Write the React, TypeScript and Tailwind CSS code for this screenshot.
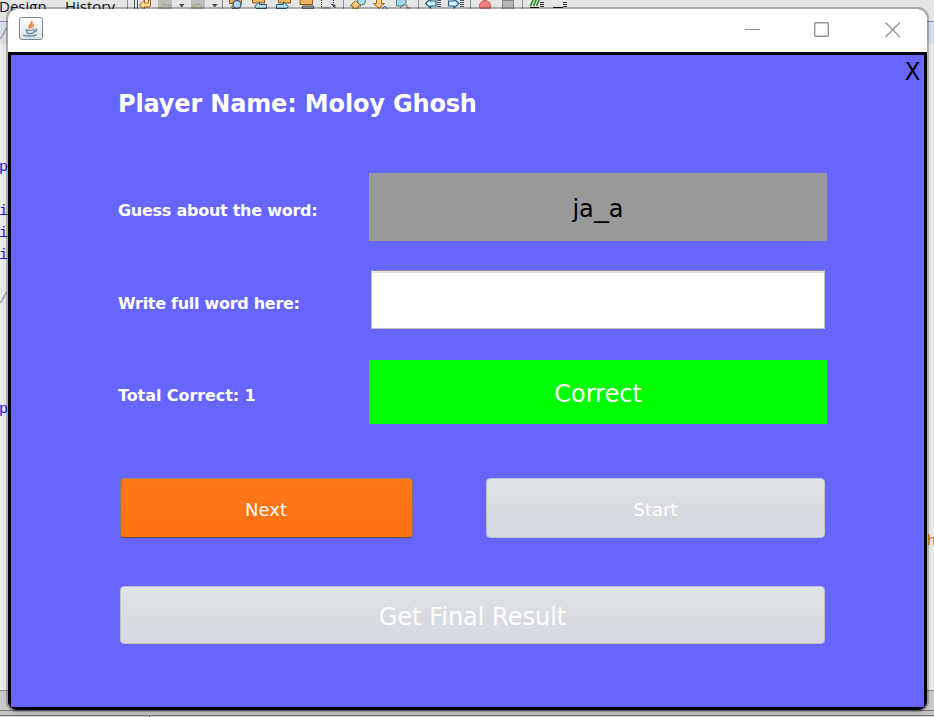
import React from "react";

const CODE_MARKS = [
  { text: "/", top: "top-[26px]", color: "text-[#969696]" },
  { text: "p", top: "top-[158px]", color: "text-[#1818d8]" },
  { text: "i", top: "top-[202px]", color: "text-[#1818d8]" },
  { text: "i", top: "top-[224px]", color: "text-[#1818d8]" },
  { text: "i", top: "top-[246px]", color: "text-[#1818d8]" },
  { text: "/", top: "top-[290px]", color: "text-[#969696]" },
  { text: "p", top: "top-[400px]", color: "text-[#1818d8]" },
];

function ToolbarIcons() {
  return (
    <svg className="absolute left-0 top-0" width="600" height="12" viewBox="0 0 600 12">
      <g stroke="#8c8c8c" strokeWidth="1">
        <path d="M127.500 0V9M222.500 0V9M343.500 0V9M418.500 0V9M470.500 0V9M522.500 0V9" />
      </g>
      <path d="M134.500 0V9M137.500 0V9" stroke="#41566f" />
      <path d="M139.500 5l5-5v3h4v-3h2v6l-1 1h-5v3z" fill="#ffdc94" stroke="#aa6412" />
      <path d="M158 0h14v9h-14zM191 0h14v9h-14z" fill="#bcbcbc" />
      <path d="M161 7l4-4v2h5v4h-5v2zM202 7l-4-4v2h-5v4h5v2z" fill="#c8b9a5" stroke="#a5a09a" />
      <path d="M179 4h5.500l-2.750 3.500zM212 4h5.500l-2.750 3.500z" fill="#435369" />
      <path d="M229.500 -1h12v4.500h-12z" fill="#e9a64b" stroke="#8d5a1c" />
      <circle cx="237" cy="4.500" r="4" fill="#b8daf0" stroke="#46688a" strokeWidth="1.500" />
      <path d="M232 5.500v3h3" fill="none" stroke="#8d5a1c" />
      <path d="M252.500 -1h12v4h-12zM278.500 -1h12v4h-12zM300 -1h12.500v5.500h-12.500z" fill="#efb15a" stroke="#8d5a1c" />
      <path d="M254.500 6.500l5-4.500v2.500h7v4h-10zM288.500 6.500l-5-4.500v2.500h-7v4h10z" fill="#b8e2f7" stroke="#235e8c" />
      <path d="M302.500 6h11v3h-11z" fill="#aaa" stroke="#555" />
      <path d="M321.500 0v8h10M333.500 0v4" fill="none" stroke="#222" strokeDasharray="1 1" />
      <path d="M331 4l4 4v-3z" fill="#526174" stroke="#526174" />
      <circle cx="361.500" cy="1" r="4" fill="#a9dce5" stroke="#44849a" />
      <path d="M350 6l5.500-5.500 5.500 5.500h-3v3h-5v-3z" fill="#ffd083" stroke="#a36516" />
      <path d="M373.500 3.500h3v-4h5v4h3l-5.500 5z" fill="#ffd083" stroke="#a36516" />
      <path d="M382 9l3-3 3 3" fill="#a9dce5" stroke="#44849a" />
      <path d="M396.500 -1h8.500l1.500 3-3.500 4h-6.500z" fill="#9ed9e5" stroke="#47849a" />
      <path d="M400 8l3-3h4v3h3" fill="none" stroke="#777" />
      <path d="M425.500 3.500l5-4.500v2h5.500v5h-5.500v2zM459 3.500l-5-4.500v2h-5.500v5h5.500v2z" fill="#d8f3ff" stroke="#17618f" strokeWidth="1.200" />
      <path d="M437 0.500h4M437 2.500h4M437 4.500h4M437 6.500h4M460 0.500h4M460 2.500h4M460 4.500h4M460 6.500h4" stroke="#4b5660" />
      <circle cx="485" cy="6" r="5.500" fill="#f1807d" stroke="#bd5e5e" />
      <path d="M502.500 0.500h11v9h-11z" fill="#b9b9b9" stroke="#838383" />
      <path d="M530.500 6l3-7M533.500 6l3-7M536.500 6l3-7" stroke="#208a16" strokeWidth="1.500" />
      <path d="M530 7.500h9M553 7.500h10" stroke="#111" />
      <path d="M540 2.500h4M540 4.500h4M540 6.500h4M563 2.500h4M563 4.500h4M563 6.500h4" stroke="#333" />
    </svg>
  );
}

function EditorBackdrop() {
  return (
    <div className="flex h-full flex-col bg-[#ececec]">
      <div className="relative h-[21px] bg-[#e6e6e6] font-['Open_Sans','Noto_Sans',sans-serif] text-[15px] leading-[20px] text-[#111]">
        <span className="absolute -left-px -top-[4px]">Design</span>
        <span className="absolute left-[65px] -top-[4px]">History</span>
        <ToolbarIcons />
      </div>
      <div className="h-[23px] border-t border-[#7e9bbd] bg-[#dbe2eb]" />
      <div className="flex-1" />
      <div className="h-[20px] border-t border-[#8b8b91] bg-[#cbcbcb]" />
      <div className="h-[5px] border-t border-[#77777c] bg-[#c5c5c5]" />
      <div className="flex h-[2px] border-t border-[#77777c] bg-[#d0d0d0]">
        <div className="w-[150px] border-r border-[#77777c]" />
      </div>
      <div className="font-['Liberation_Mono',monospace] text-[15px] leading-[20px]">
        {CODE_MARKS.map((mark) => (
          <span key={mark.top} className={`absolute -left-px ${mark.top} ${mark.color}`}>
            {mark.text}
          </span>
        ))}
        <span className="absolute left-[927px] top-[532px] text-[#ce7b00]">h</span>
      </div>
    </div>
  );
}

function JavaIcon() {
  return (
    <svg width="24" height="23" viewBox="0 0 24 23" fill="none">
      <defs>
        <linearGradient id="tile" x1="0" y1="0" x2="0" y2="1">
          <stop stopColor="#fff" />
          <stop offset="1" stopColor="#dcdee0" />
        </linearGradient>
      </defs>
      <rect x="0.500" y="0.500" width="23" height="22" rx="2" fill="url(#tile)" stroke="#718798" />
      <path d="M11 11.500c-4-3 3-4 1.500-7.500 2.500 3-3 4-1.500 7.500M13 11c-2-2 1-2.500 1.500-4-1 2 1 2-1.500 4" stroke="#ed8b40" strokeWidth="1.300" />
      <path d="M6.500 12.500c2 1 6 1 9 0M7.500 13c0 4 1.500 3.500 4 3.500s4-.5 4-3.500M16 12c2.500-.5 2.500 2.500-1 3M4.500 17.500c-1 2 11 2 13 0" stroke="#668ba5" strokeWidth="1.300" />
    </svg>
  );
}

function TitleBar() {
  return (
    <header className="flex h-[43px] items-start justify-between bg-white pl-[11px] pr-[26px]">
      <div className="pt-[8px]"><JavaIcon /></div>
      <svg className="mt-[12px]" width="156" height="17" viewBox="0 0 156 17" fill="none" stroke="#929292">
        <path d="M0 8.500h15" />
        <rect x="69.700" y="1.700" width="13.600" height="13.600" rx="1" strokeWidth="1.400" />
        <path d="M140.500 1.500l14.500 14.500M155 1.500L140.500 16" strokeWidth="1.200" />
      </svg>
    </header>
  );
}

function GreyButton({ className, children }: { className: string; children: React.ReactNode }) {
  return (
    <button className={`flex items-center justify-center rounded-[4px] border border-[#bfc2c5] bg-linear-to-b from-[#e1e4e8] from-0% via-[#d7dbdf] via-60% to-[#d7dae2] to-70% text-white ${className}`}>
      {children}
    </button>
  );
}

function GameForm() {
  return (
    <main className="relative h-[658px] border-[3px] border-black bg-[#6666ff] pl-[107px] pt-[33px] font-['DejaVu_Sans',sans-serif] text-white">
      <button className="absolute right-[4px] top-[3px] origin-right scale-x-[0.95] text-[24px] leading-[28px] text-black">X</button>
      <h1 className="h-[85px] whitespace-nowrap text-[24px] leading-[32px] font-bold tracking-[-0.16px]">Player Name: Moloy Ghosh</h1>
      <div className="flex h-[68px] w-[709px] items-center justify-between">
        <label className="pt-[8px] text-[16px] font-bold tracking-[-0.26px]">Guess about the word:</label>
        <div className="flex h-[68px] w-[458px] items-center justify-center bg-[#999999] pt-[3px] text-[24px] text-black">
          <span>ja</span>
          <span className="inline-block w-[15px] origin-left scale-x-[1.25]">_</span>
          <span>a</span>
        </div>
      </div>
      <div className="mt-[29px] flex h-[59px] w-[707px] items-center justify-between">
        <label className="pt-[8px] text-[16px] font-bold tracking-[-0.29px]">Write full word here:</label>
        <input aria-label="Full word" className="h-[59px] w-[454px] border border-[#bcbcbc] border-t-[#8b8b8b] bg-white shadow-[inset_0_2px_0_#e0e0e0] outline-none" />
      </div>
      <div className="mt-[31px] flex h-[64px] w-[709px] items-center justify-between">
        <label className="pt-[8px] text-[16px] font-bold tracking-[-0.08px]">Total Correct: 1</label>
        <div className="flex h-[64px] w-[458px] items-center justify-center bg-[#00ff00] pt-[3px] text-[24px]">Correct</div>
      </div>
      <div className="ml-[2px] mt-[54px] flex w-[705px] justify-between">
        <button className="flex h-[60px] w-[293px] items-center justify-center rounded-[4px] border border-[#84776b] border-t-[#a08872] border-b-[#66513f] bg-linear-to-b from-[#ff771c] to-[#ff7112] pt-[2px] pr-[1px] text-[18px]">Next</button>
        <GreyButton className="h-[60px] w-[339px] pt-[2px] text-[18px]">Start</GreyButton>
      </div>
      <GreyButton className="ml-[2px] mt-[48px] h-[58px] w-[705px] pt-[4px] text-[24px]">Get Final Result</GreyButton>
    </main>
  );
}

export default function App() {
  return (
    <div className="relative h-[717px] w-[934px] overflow-hidden">
      <EditorBackdrop />
      <div className="absolute left-[8px] top-[9px] h-[701px] w-[919px] overflow-hidden rounded-[9px] bg-black shadow-[0_0_0_2px_rgba(0,0,0,0.22),0_2px_8px_rgba(0,0,0,0.15)]">
        <TitleBar />
        <GameForm />
      </div>
    </div>
  );
}
